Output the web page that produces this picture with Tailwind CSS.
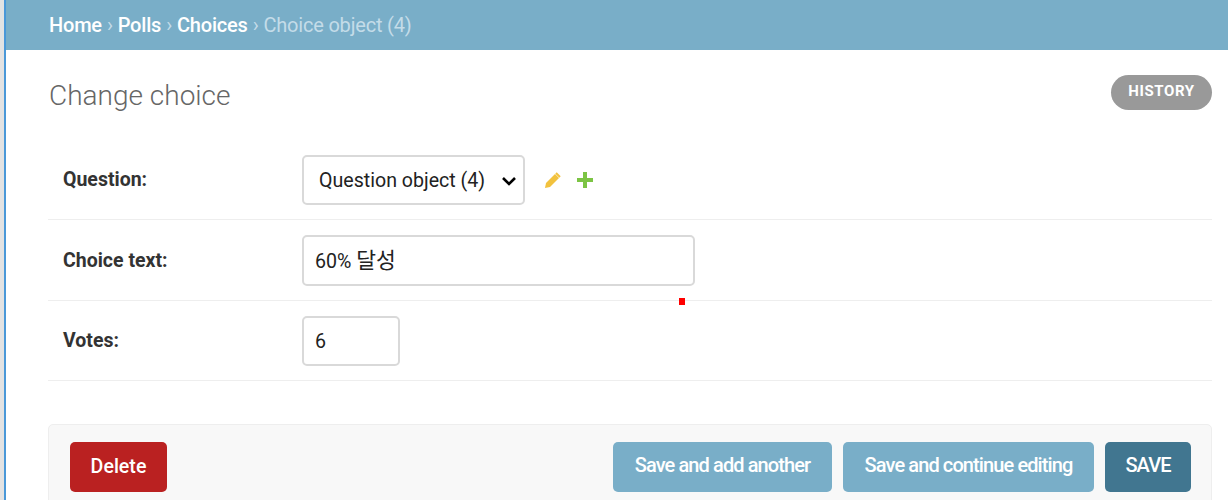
<!DOCTYPE html>
<html lang="en">
<head>
  <meta charset="UTF-8">
  <title>Change choice</title>
  <script src="https://cdn.jsdelivr.net/npm/@tailwindcss/browser@4"></script>
</head>
<body class="bg-white h-[500px] overflow-hidden font-['Roboto',sans-serif]">
  <div class="flex h-[500px] relative">
    <div class="w-[4px] bg-[#e3e3e3]"></div>
    <div class="w-[2px] bg-[#4a98d8]"></div>
    <div class="flex-1 min-w-0">
      <!-- breadcrumbs -->
      <div class="h-[50px] bg-[#79aec8] pl-[43px] flex items-center text-[20px] tracking-[-0.2px] text-[#c4dce8]">
        <a class="text-white font-medium">Home</a><span class="mx-[5px]">›</span>
        <a class="text-white font-medium">Polls</a><span class="mx-[5px]">›</span>
        <a class="text-white font-medium">Choices</a><span class="mx-[5px]">›</span>
        <span>Choice object (4)</span>
      </div>

      <div class="pl-[42px] pr-[16px]">
        <div class="flex justify-between pt-[25px] h-[105px]">
          <h1 class="ml-[1px] mt-[1px] text-[28px] leading-[40px] font-light text-[#666]">Change choice</h1>
          <a class="h-[35px] w-[101px] rounded-full bg-[#999] text-white text-[15px] font-bold tracking-[0.6px] flex items-center justify-center pb-[3px]">HISTORY</a>
        </div>

        <!-- form rows -->
        <div class="h-[65px] border-b border-[#eeeeee] flex items-start">
          <label class="w-[254px] pl-[15px] pt-[14px] text-[#333] text-[19.5px] font-bold leading-[21px]">Question:</label>
          <div class="flex items-center gap-[19px]">
            <div class="w-[223px] h-[50px] border-2 border-[#d9d9d9] rounded-[5px] bg-white flex items-center justify-between pl-[15px] pr-[6px] pt-[1px] text-[19.6px] text-[#222]">
              <span>Question object (4)</span>
              <svg class="w-[16px] h-[10px]" viewBox="0 0 16 10"><path d="M2 2l6 6 6-6" fill="none" stroke="#000" stroke-width="2.6"/></svg>
            </div>
            <div class="flex items-center gap-[16px]">
              <svg class="w-[17px] h-[17px]" viewBox="0 0 17 17"><path d="M1 16l1-5L11 2l4 4-9 9z" fill="#f2c23e"/><path d="M12 1l4 4" stroke="#f2c23e" stroke-width="2"/></svg>
              <svg class="w-[16px] h-[16px]" viewBox="0 0 16 16"><path d="M6 0h4v6h6v4h-6v6H6v-6H0V6h6z" fill="#7cc444"/></svg>
            </div>
          </div>
        </div>

        <div class="h-[81px] border-b border-[#eeeeee] flex items-start pt-[15px]">
          <label class="w-[254px] pl-[15px] pt-[15px] text-[#333] text-[19.5px] font-bold leading-[21px]">Choice text:</label>
          <div class="w-[393px] h-[51px] border-2 border-[#d9d9d9] rounded-[5px] flex items-center pl-[11px] pt-[1px] text-[19.6px] text-[#222] font-['Roboto','Noto_Sans_CJK_KR',sans-serif]"><span>60% <span class="text-[21.5px]">달성</span></span></div>
        </div>

        <div class="h-[80px] border-b border-[#eeeeee] flex items-start pt-[15px]">
          <label class="w-[254px] pl-[15px] pt-[14px] text-[#333] text-[19.5px] font-bold leading-[21px]">Votes:</label>
          <div class="w-[98px] h-[50px] border-2 border-[#d9d9d9] rounded-[5px] flex items-center pl-[11px] pt-[1px] text-[19.6px] text-[#222]">6</div>
        </div>

        <!-- submit row -->
        <div class="mt-[43px] h-[90px] bg-[#f8f8f8] border border-[#eeeeee] rounded-[5px] pt-[17px] pl-[21px] pr-[20px] flex items-start justify-between text-[19.6px] text-white font-medium">
          <a class="w-[97px] h-[50px] rounded-[5px] bg-[#ba2121] flex items-center justify-center pb-[1px]">Delete</a>
          <div class="flex gap-[11px] text-[20px] tracking-[-0.9px]">
            <a class="w-[219px] h-[50px] rounded-[5px] bg-[#79aec8] flex items-center justify-center pb-[4px]">Save and add another</a>
            <a class="w-[251px] h-[50px] rounded-[5px] bg-[#79aec8] flex items-center justify-center pb-[4px]">Save and continue editing</a>
            <a class="w-[86px] h-[50px] rounded-[5px] bg-[#417690] flex items-center justify-center pb-[4px]">SAVE</a>
          </div>
        </div>
      </div>
    </div>
    <!-- stray mark in the screenshot -->
    <div class="absolute left-[679px] top-[298px] w-[6px] h-[7px] bg-[#ff0000]"></div>
  </div>
</body>
</html>
